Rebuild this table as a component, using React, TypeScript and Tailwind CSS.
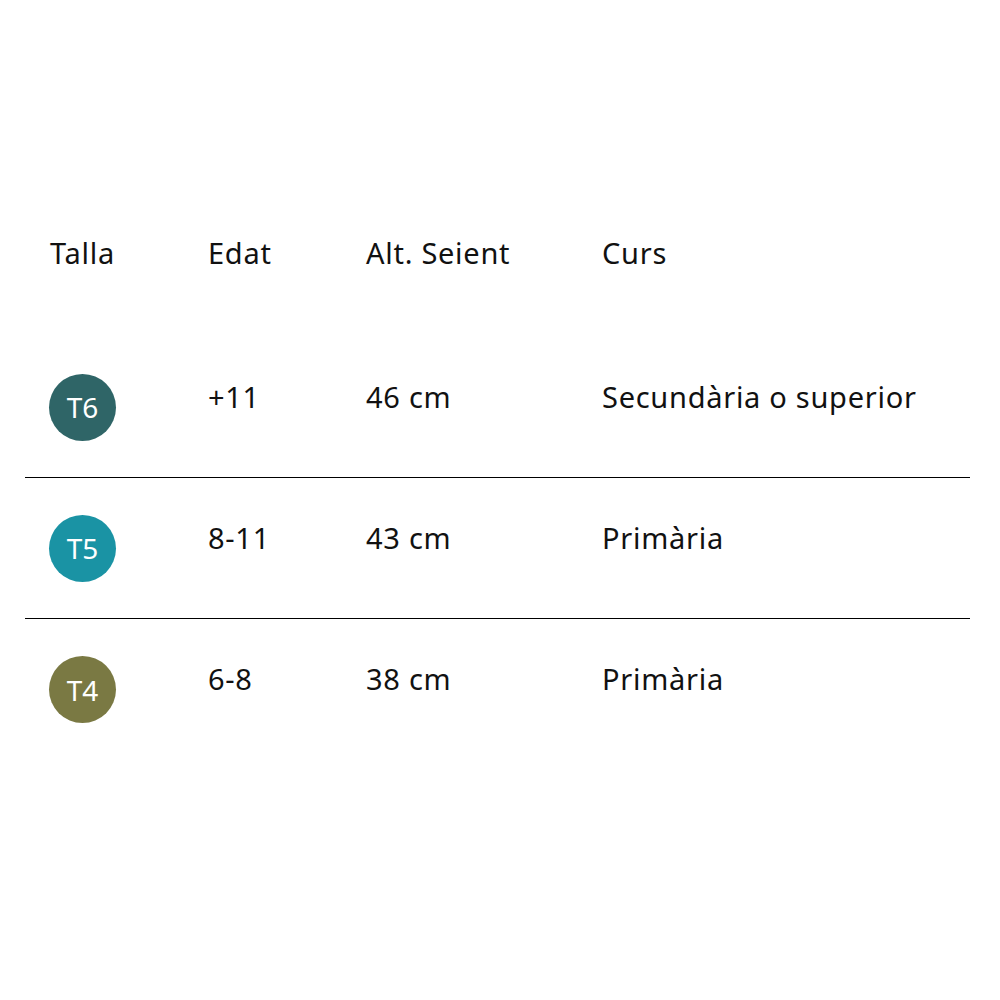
const rows = [
  { size: "T6", color: "bg-[#2f6567]", age: "+11", seat: "46 cm", course: "Secundària o superior" },
  { size: "T5", color: "bg-[#1a93a4]", age: "8-11", seat: "43 cm", course: "Primària" },
  { size: "T4", color: "bg-[#7a7943]", age: "6-8", seat: "38 cm", course: "Primària" },
];

export default function App() {
  return (
    <div
      className="w-[1000px] h-[1000px] bg-white text-[#111] pt-[229px] pl-[25px] pr-[30px] tracking-[0.045em]"
      style={{ fontFamily: "'Noto Sans', sans-serif" }}
    >
      {/* Header */}
      <div className="grid grid-cols-[183px_158px_236px_1fr] text-[29px] leading-[48px] h-[108px]">
        <div className="pl-[25px]">Talla</div>
        <div>Edat</div>
        <div>Alt. Seient</div>
        <div>Curs</div>
      </div>

      {rows.map((r, i) => (
        <div
          key={r.size}
          className={`grid grid-cols-[183px_158px_236px_1fr] h-[141px] text-[29px] leading-[48px] ${
            i < rows.length - 1 ? "border-b border-black" : ""
          }`}
        >
          <div className="pl-[24px] flex items-center">
            <div
              className={`w-[67px] h-[67px] rounded-full ${r.color} text-white flex items-center justify-center text-[28px] tracking-normal`}
            >
              {r.size}
            </div>
          </div>
          <div className="pt-[36px]">{r.age}</div>
          <div className="pt-[36px]">{r.seat}</div>
          <div className="pt-[36px]">{r.course}</div>
        </div>
      ))}
    </div>
  );
}
